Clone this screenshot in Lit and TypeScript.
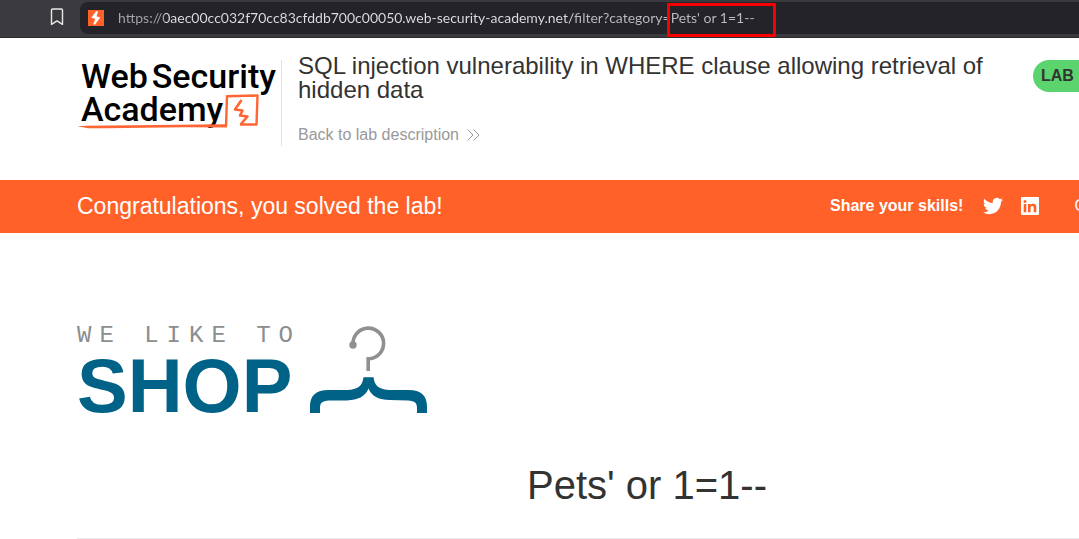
import { LitElement, html, css, svg } from "lit";
import { customElement } from "lit/decorators.js";

const bolt = svg`<path d="M8.300 1 3.300 7.800l4 1.200-2 5 1.500.800 5.500-7.300-3.800-1.200 1.500-4.300z" fill="#fff" />`;

@customElement("browser-bar")
class BrowserBar extends LitElement {
  static styles = css`
    :host {
      display: block;
      position: relative;
      height: 38px;
      background: #3b3a3f;
      box-shadow: inset 0 -1px #2c2b30;
    }
    .bar {
      display: flex;
      align-items: center;
      height: 34px;
    }
    .bookmark {
      display: flex;
      border: 0;
      padding: 0 16px 0 50px;
      background: none;
    }
    .address {
      flex: 1;
      display: flex;
      align-items: center;
      gap: 14px;
      height: 32px;
      margin-top: 1px;
      padding-left: 8px;
      border-radius: 8px 0 0 8px;
      background: #242329;
    }
    .url {
      flex: 1;
      min-width: 0;
      border: 0;
      padding: 0;
      outline: 0;
      background: linear-gradient(90deg, #a6a6aa 47px, #e0e0e2 47px 456px, #bcbcc0 456px);
      background-clip: text;
      color: transparent;
      font: 14px/20px Lato, sans-serif;
    }
    .mark {
      position: absolute;
      left: 667px;
      top: 3px;
      width: 103px;
      height: 28px;
      border: 3px solid #f60000;
    }
  `;
  render() {
    return html`
      <div class="bar">
        <button class="bookmark" aria-label="Bookmark this page">
          <svg width="14" height="18" viewBox="0 0 14 18" fill="none" stroke="#e8e8ea" stroke-width="1.4" stroke-linejoin="round">
            <path d="M1.5 2.2Q1.5 1 2.7 1h8.6q1.2 0 1.2 1.2v14.2L7 12.9l-5.5 3.5z" />
          </svg>
        </button>
        <div class="address">
          <svg width="16" height="16" viewBox="0 0 16 16">
            <rect width="16" height="16" fill="#ff6128" />
            ${bolt}
          </svg>
          <input
            class="url"
            aria-label="Address"
            spellcheck="false"
            value="https://0aec00cc032f70cc83cfddb700c00050.web-security-academy.net/filter?category=Pets' or 1=1--"
          />
        </div>
      </div>
      <div class="mark"></div>
    `;
  }
}

@customElement("academy-logo")
class AcademyLogo extends LitElement {
  static styles = css`
    :host {
      display: block;
      position: relative;
      width: 204px;
      height: 86px;
      color: #000;
      font: 500 34px/33px Roboto, sans-serif;
    }
    .words {
      display: flex;
      gap: 4px;
      padding-left: 4px;
    }
    .art {
      position: absolute;
      left: 0;
      top: 0;
    }
  `;
  render() {
    return html`
      <div class="words"><span>Web</span><span>Security</span></div>
      <div class="words"><span>Academy</span></div>
      <svg class="art" width="204" height="86" viewBox="1 0 204 86" fill="none" stroke="#ff6633">
        <path d="M1 66.3 10 65.7 148 64.2 151 64.6 151 67.4 110 67.3 30 68.2 12 68.2 7 67.2z" fill="#ff6633" stroke="none" />
        <path d="M150 66.5 151 36.3 181.5 35.5 180.5 64.5 164 64.5" stroke-width="2.4" stroke-linejoin="round" />
        <path d="M165.5 40 159 49.5 166.5 50.5 164 55.5 171.5 56.5 164.5 64.5" stroke-width="2.6" stroke-linejoin="round" />
      </svg>
    `;
  }
}

@customElement("shop-logo")
class ShopLogo extends LitElement {
  static styles = css`
    :host {
      display: flex;
      gap: 18px;
    }
    .tagline {
      color: #8b8d8e;
      font: 24px/24px "Liberation Mono", monospace;
      letter-spacing: 8px;
    }
    .name {
      color: #006287;
      font: bold 76px/76px "Liberation Sans", sans-serif;
    }
    .words {
      width: 215px;
      white-space: nowrap;
    }
  `;
  render() {
    return html`
      <div class="words">
        <div class="tagline">WE LIKE TO</div>
        <div class="name">SHOP</div>
      </div>
      <svg width="118" height="90" viewBox="0 0 118 90">
        <path d="M43 20A15.3 15.3 0 1 1 58.2 34.7V47" fill="none" stroke="#8f9091" stroke-width="3.6" />
        <circle cx="43" cy="21" r="3.7" fill="#8f9091" />
        <path
          d="M53.5 53.3h10C64.5 62 69 65.7 80 66h18c14 0 19 6 19 17v6h-10v-5c0-5-2-7-9-7.500-6-.4-12-.3-18-.5-11-.5-18-3-21.500-11.500C55 73 48 75.700 37 76.500h-18C12 77 10 79 10 84v5H0v-6C0 72 5 66 19 66h18c11-.3 15.500-4 16.500-12.700z"
          fill="#006287"
        />
      </svg>
    `;
  }
}

@customElement("app-root")
class AppRoot extends LitElement {
  static styles = css`
    :host {
      display: block;
      min-height: 100vh;
      overflow: hidden;
      background: #fff;
      color: #333332;
      font: 16px/20px "Liberation Sans", Arial, sans-serif;
    }
    .container {
      box-sizing: border-box;
      min-width: 1217px;
      padding-left: 77px;
    }
    .header {
      display: flex;
      align-items: flex-start;
      padding-top: 22px;
      padding-bottom: 34px;
    }
    .intro {
      flex: 1;
      display: flex;
      flex-direction: column;
      align-items: flex-start;
      gap: 23px;
      margin-top: -6px;
      padding: 0 16px;
    }
    .brand {
      border-right: 1px solid #e2e3e4;
    }
    h2 {
      margin: 0;
      font-size: 24px;
      line-height: 24px;
      font-weight: normal;
    }
    a {
      color: inherit;
      text-decoration: none;
    }
    .back {
      display: flex;
      align-items: center;
      gap: 8px;
      color: #999;
    }
    .badge {
      box-sizing: border-box;
      width: 184px;
      padding: 6px 8px;
      border-radius: 16px;
      background: #5bd46e;
      font-weight: bold;
    }
    .banner {
      background: #ff6128;
      color: #fff;
    }
    .solved {
      display: flex;
      align-items: center;
      height: 53px;
      padding-bottom: 2px;
    }
    .message {
      width: 753px;
      font-size: 23px;
    }
    .share {
      margin-right: 20px;
      font-weight: bold;
    }
    .social {
      display: flex;
      margin-right: 17px;
    }
    .next {
      margin-left: 17px;
    }
    .shop {
      padding-top: 91px;
    }
    h1 {
      margin: 37px 0 0;
      padding-bottom: 29px;
      border-bottom: 1px solid #e9ecec;
      font-size: 40px;
      line-height: 48px;
      font-weight: normal;
      text-align: center;
    }
  `;
  render() {
    return html`
      <browser-bar></browser-bar>
      <header class="container header">
        <a class="brand" href="#" aria-label="Web Security Academy"><academy-logo></academy-logo></a>
        <div class="intro">
          <h2>SQL injection vulnerability in WHERE clause allowing retrieval of hidden data</h2>
          <a class="back" href="#">
            Back to lab description
            <svg width="13" height="12" viewBox="0 0 13 12" fill="none" stroke="#999">
              <path d="M.6.5 6 6 .6 11.500M6.600.5 12 6l-5.400 5.500" />
            </svg>
          </a>
        </div>
        <div class="badge">LAB</div>
      </header>
      <section class="banner">
        <div class="container solved">
          <div class="message">Congratulations, you solved the lab!</div>
          <span class="share">Share your skills!</span>
          <a class="social" href="#" aria-label="Share on Twitter">
            <svg width="20" height="20" viewBox="0 0 24 24" fill="#fff">
              <path d="M23.950 4.570a10 10 0 0 1-2.820.770 4.960 4.960 0 0 0 2.160-2.720c-.950.550-2 .960-3.130 1.180a4.920 4.920 0 0 0-8.380 4.480C7.690 8.090 4.070 6.130 1.640 3.160a4.930 4.930 0 0 0 1.520 6.570 4.900 4.900 0 0 1-2.230-.610v.060a4.920 4.920 0 0 0 3.950 4.830 5 5 0 0 1-2.210.080 4.940 4.940 0 0 0 4.600 3.420A9.870 9.870 0 0 1 0 19.540a13.990 13.990 0 0 0 7.550 2.210c9.050 0 14-7.500 14-13.980 0-.210 0-.420-.020-.630a9.940 9.940 0 0 0 2.420-2.570z" />
            </svg>
          </a>
          <a class="social" href="#" aria-label="Share on LinkedIn">
            <svg width="20" height="20" viewBox="0 0 20 20">
              <rect x="1" y="1" width="18" height="18" rx="1" fill="#fff" />
              <path
                fill="#ff6128"
                d="M3.700 8h2.600v8.200H3.700zM5 4a1.500 1.500 0 1 1 0 3 1.500 1.500 0 0 1 0-3zM8 8h2.500v1.100c.5-.8 1.400-1.300 2.600-1.300 2.500 0 3.200 1.500 3.200 3.800v4.600h-2.600v-4.100c0-1.200-.2-2-1.400-2s-1.700.8-1.700 2v4.100H8z"
              />
            </svg>
          </a>
          <a class="next" href="#">Continue learning</a>
        </div>
      </section>
      <main class="container shop">
        <shop-logo></shop-logo>
        <h1>Pets' or 1=1--</h1>
      </main>
    `;
  }
}
